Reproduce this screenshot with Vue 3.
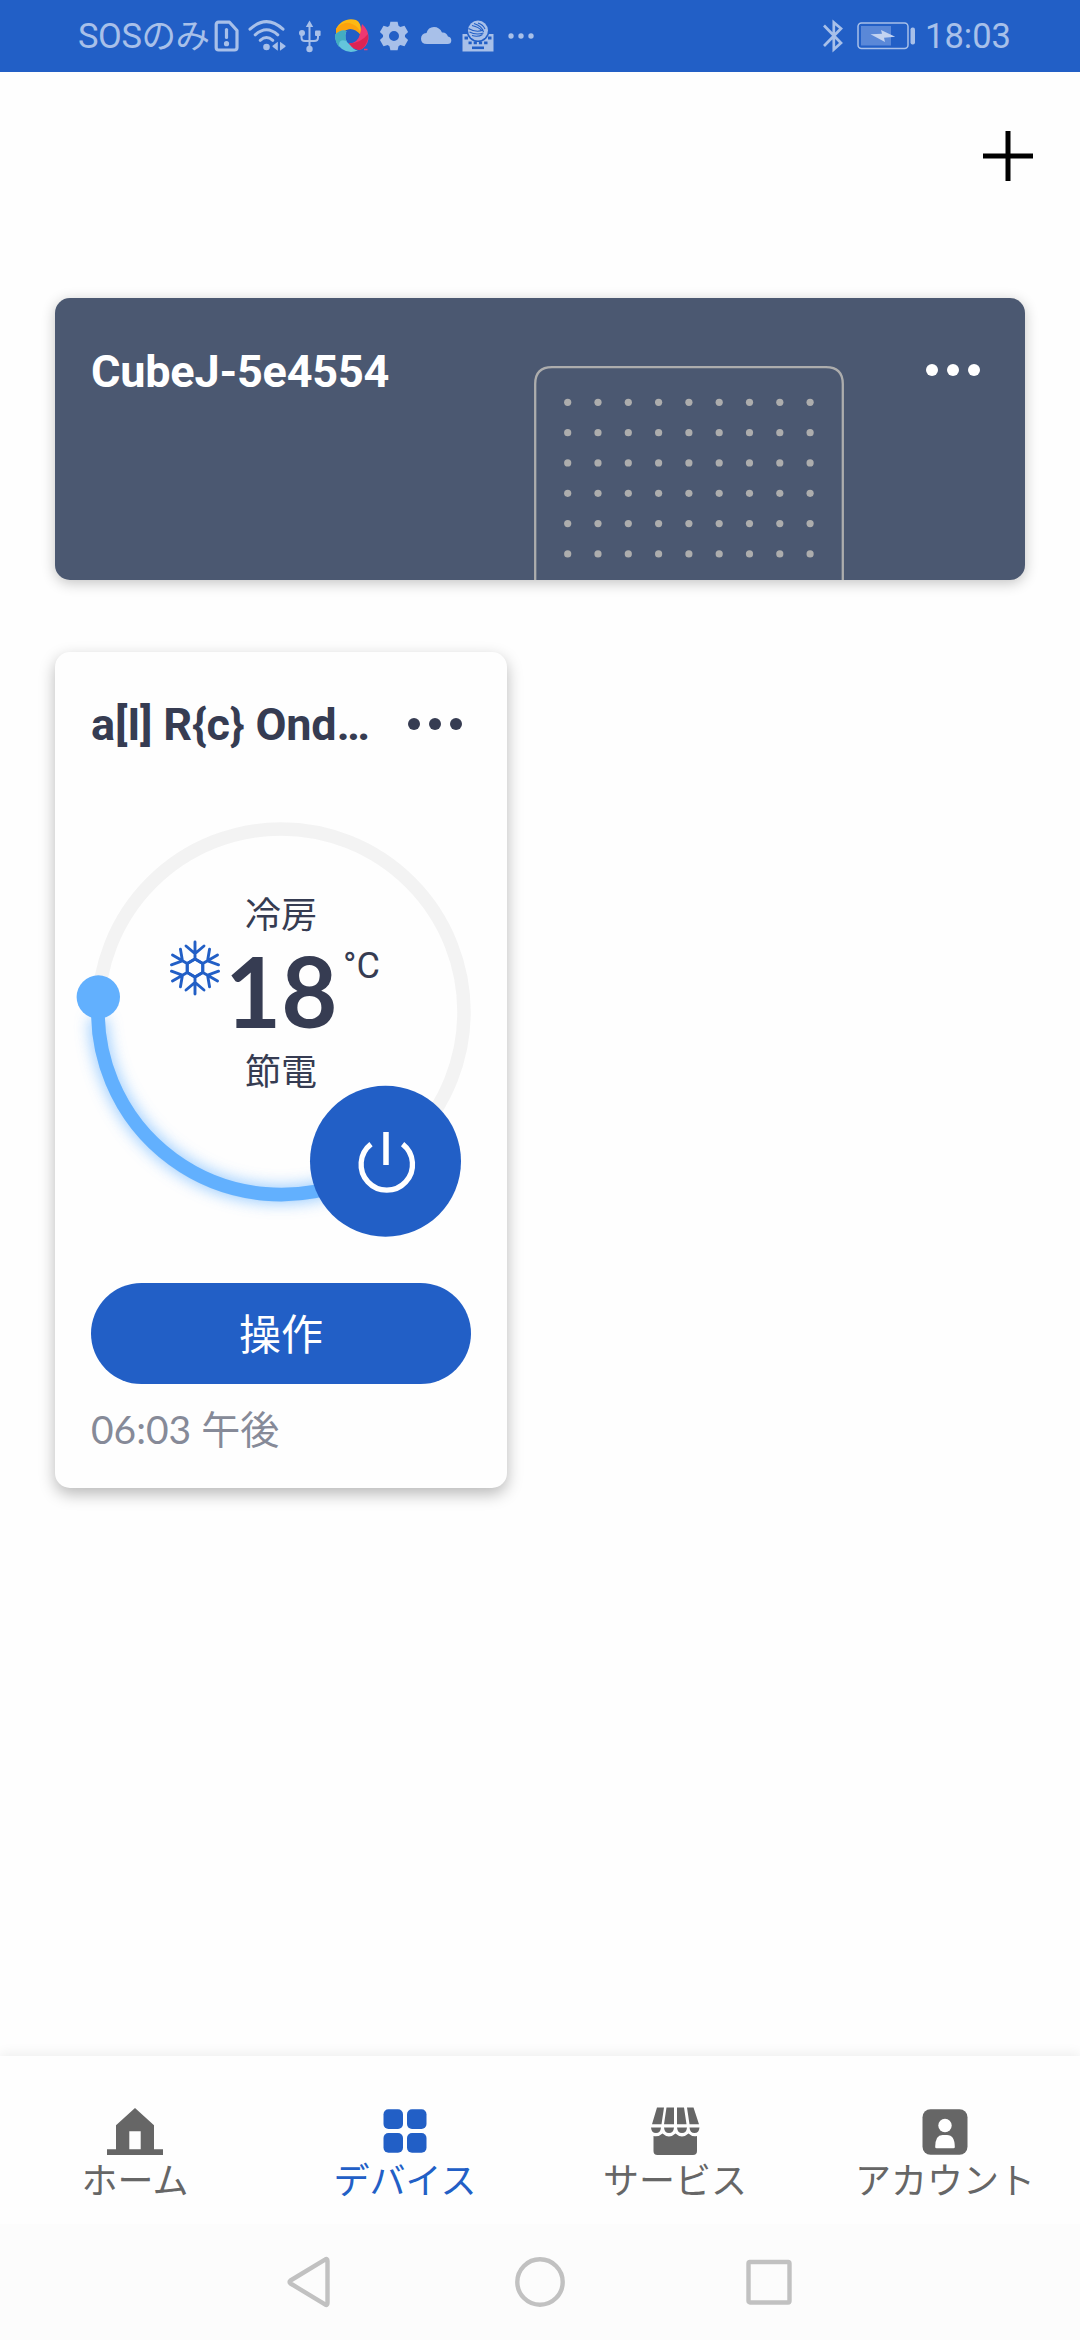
<script setup>
const dots = []
for (let row = 0; row < 6; row++) {
  for (let col = 0; col < 9; col++) {
    dots.push({ id: row * 9 + col, x: 33.7 + col * 30.3, y: 36.3 + row * 30.33 })
  }
}
const flakeArms = [0, 60, 120, 180, 240, 300]
const gearTeeth = [0, 60, 120, 180, 240, 300]
</script>

<template>
  <div class="screen">
    <header class="status">
      <span class="carrier">SOSのみ</span>
      <svg class="sim" width="26" height="34" viewBox="0 0 26 34">
        <path d="M4.5 3.2H15.5L23 11.5V28.5Q23 31 20.5 31H4.5Q2.2 31 2.2 28.5V5.5Q2.2 3.2 4.5 3.2Z" fill="none" stroke="currentColor" stroke-width="3.2" stroke-linejoin="round" />
        <path d="M12.5 10.5V18.5" stroke="currentColor" stroke-width="3.2" stroke-linecap="round" />
        <circle cx="12.5" cy="24.7" r="2.6" fill="currentColor" />
      </svg>
      <svg class="wifi" width="40" height="34" viewBox="0 0 40 34">
        <g fill="none" stroke="currentColor" stroke-width="3" stroke-linecap="round">
          <path d="M3 10.2Q19.5 -5 36 10.2" />
          <path d="M8.2 15.8Q19.5 5.6 30.8 15.8" />
          <path d="M13.2 21.3Q19.5 15.8 25.8 21.3" />
        </g>
        <circle cx="19.5" cy="28" r="3.3" fill="currentColor" />
        <path d="M30.8 22.8V31.8L25.5 27.8V26.8ZM33 22.8V31.8L38.5 27.8V26.8Z" fill="currentColor" />
      </svg>
      <svg class="usb" width="24" height="34" viewBox="0 0 24 34">
        <g fill="none" stroke="currentColor" stroke-width="2">
          <path d="M11.5 6V30M3.5 14V18.5Q3.5 22 7 22H16Q20 22 20 18.5V14" />
        </g>
        <path d="M11.5 1.5L15.2 8H7.8Z" fill="currentColor" />
        <circle cx="4" cy="14" r="3" fill="currentColor" />
        <rect x="17" y="11.5" width="5.6" height="5.6" rx="1" fill="currentColor" />
        <circle cx="11.5" cy="30" r="3.2" fill="currentColor" />
      </svg>
      <svg class="swirl" width="36" height="36" viewBox="0 0 36 36">
        <path d="M2 11C6 3 14-.5 22 2Q28 4.500 27 17Q20 7 11 12.500Q6 12 2 16Z" fill="#fdb913" />
        <path d="M2 11Q10 2 18 6Q26 9 27 17Q19 8 11 12.500Q6 12 2 16Z" fill="#fca30d" />
        <path d="M28 6Q35 12 34.500 21Q33 30 25 32Q16 30 15 25.500Q24 25 26 16Z" fill="#ee3872" />
        <path d="M34 21Q31 31 25 32Q16 30 15 25.500Q27 25 34 16Z" fill="#dc2454" />
        <path d="M1 17Q6 11 12.500 13Q9 22 16 27Q20 32 24 32.500Q15 36 8 31Q1 26 1 17Z" fill="#64c5dc" />
        <path d="M1 17Q6 11 12.500 13Q10 18 12.500 23Q4 20 5 29Q1 24 1 17Z" fill="#43adc2" />
        <path d="M30 31.500H33.500" stroke="#ee3872" stroke-width="1.500" />
      </svg>
      <svg class="gear" width="30" height="30" viewBox="-15 -15 30 30">
        <circle r="8" fill="none" stroke="currentColor" stroke-width="6" />
        <path v-for="a in gearTeeth" :key="a" d="M-4.800 -9L-3.600 -14.200H3.600L4.800 -9Z" :transform="`rotate(${a})`" fill="currentColor" />
      </svg>
      <svg class="cloud" width="32" height="20" viewBox="0 0 32 20">
        <path d="M7 18Q1 18 1 12.700Q1 7.500 6.500 7Q8 1 14 1Q19.500 1 22 6.500Q26 5.800 28 10.500Q31.300 11 31.300 14.500Q31.300 18 27.500 18Z" fill="currentColor" />
      </svg>
      <svg class="keyboard" width="32" height="34" viewBox="0 0 32 34">
        <path d="M.5 15H31.500V32.500H.5Z" fill="currentColor" />
        <circle cx="16" cy="11.500" r="11.500" fill="#225fc6" />
        <circle cx="16" cy="11.500" r="10" fill="currentColor" />
        <g fill="none" stroke="#225fc6" stroke-width="1.100">
          <path d="M12 4.500Q20 7 21.500 13M16 4Q21 5.500 23 10M6.500 9.500Q14 14 21.500 11M7.500 13Q14 16.500 21.500 14M10 16.500Q16 18.500 20.500 15.500M10 6.500Q17 8 20 12" />
        </g>
        <path d="M2.500 19H6M26 19H29.500M6.500 23.800H9.700M11.700 23.800H14.900M16.900 23.800H20.100M22.100 23.800H25.500" stroke="#225fc6" stroke-width="2.800" />
        <path d="M10 28.800H22" stroke="#225fc6" stroke-width="2.600" />
      </svg>
      <svg class="more" width="28" height="8" viewBox="0 0 28 8">
        <circle cx="4" cy="4" r="2.700" fill="currentColor" />
        <circle cx="14" cy="4" r="2.700" fill="currentColor" />
        <circle cx="24" cy="4" r="2.700" fill="currentColor" />
      </svg>
      <svg class="bluetooth" width="22" height="34" viewBox="0 0 22 34">
        <path d="M2 6.500L19 24L11.800 30.500V3.500L19 9.500L2 27" fill="none" stroke="currentColor" stroke-width="2.700" />
      </svg>
      <svg class="battery" width="60" height="30" viewBox="0 0 60 30">
        <rect x="1" y="2" width="50" height="25.500" rx="3.500" fill="none" stroke="currentColor" stroke-width="1.500" />
        <rect x="4" y="5" width="30" height="19.500" fill="#5a88d8" />
        <rect x="53.500" y="6.500" width="4.500" height="17" rx="2" fill="currentColor" />
        <path d="M13.500 13.300L25 12.800L24 9L38.200 15.800L27 16.800L28 21Z" fill="#c3d3f1" />
      </svg>
      <span class="clock">18:03</span>
    </header>

    <main class="content">
      <div class="toolbar">
        <svg width="50" height="50" viewBox="0 0 50 50">
          <path d="M25 0V50M0 25H50" stroke="#000" stroke-width="5" />
        </svg>
      </div>

      <section class="hub">
        <h2 class="hub-name">CubeJ-5e4554</h2>
        <svg class="cube" width="310" height="214" viewBox="0 0 310 214">
          <path d="M1.200 214V18Q1.200 1.200 18 1.200H292Q308.800 1.200 308.800 18V214" fill="none" stroke="#adadad" stroke-width="2.300" />
          <circle v-for="d in dots" :key="d.id" :cx="d.x" :cy="d.y" r="3.600" fill="#adadad" />
        </svg>
        <div class="menu hub-menu"><i></i><i></i><i></i></div>
      </section>

      <section class="device">
        <div class="device-head">
          <h2 class="device-name">a[I] R{c} Ond…</h2>
          <div class="menu"><i></i><i></i><i></i></div>
        </div>
        <div class="dial">
          <svg width="452" height="440" viewBox="55 812 452 440">
            <defs>
              <filter id="glow" x="-20%" y="-20%" width="140%" height="140%">
                <feGaussianBlur stdDeviation="8" />
              </filter>
            </defs>
            <circle cx="281" cy="1012" r="183" fill="none" stroke="#f3f3f3" stroke-width="13.500" />
            <path d="M98 1018A183 183 0 0 0 350 1181" fill="none" stroke="#62b0fe" stroke-width="16" opacity=".7" filter="url(#glow)" />
            <path d="M98.500 997A183 183 0 0 0 350 1181" fill="none" stroke="#62b0fe" stroke-width="13.700" />
            <circle cx="98.300" cy="997" r="21.700" fill="#62b0fe" />
            <circle cx="385.500" cy="1161.300" r="75.500" fill="#225fc6" />
            <path d="M371 1144.200A25.700 25.700 0 1 0 402.600 1144.200" fill="none" stroke="#fff" stroke-width="5.300" />
            <path d="M386 1132V1165" stroke="#fff" stroke-width="5.500" />
          </svg>
          <div class="readout">
            <span class="mode">冷房</span>
            <div class="temp">
              <svg class="flake" width="54" height="58" viewBox="-27 -29 54 58">
                <g v-for="a in flakeArms" :key="a" :transform="`rotate(${a})`" fill="none" stroke="#225fc6" stroke-width="2.900" stroke-linecap="round">
                  <path d="M-7.700 -4.500L0 -9L7.700 -4.500M0 -9V-26M-9 -22L0 -14.500L9 -22" />
                </g>
              </svg>
              <span class="value">18</span>
              <span class="unit">°C</span>
            </div>
            <span class="mode">節電</span>
          </div>
        </div>
        <button class="operate">操作</button>
        <p class="time">06:03 午後</p>
      </section>
    </main>

    <nav class="tabs">
      <div class="tab">
        <svg width="56" height="50" viewBox="0 0 56 50">
          <path d="M28 1L47 18.300V42.300H56V48H0V42.300H9V18.300ZM22.300 24.300V42.300H33.700V24.300Z" fill="currentColor" fill-rule="evenodd" />
        </svg>
        <span>ホーム</span>
      </div>
      <div class="tab active">
        <svg width="44" height="50" viewBox="0 0 44 50">
          <g fill="currentColor">
            <rect x=".5" y="2.300" width="19.500" height="19.700" rx="5" />
            <rect x="24" y="2.300" width="19.500" height="19.700" rx="5" />
            <rect x=".5" y="26" width="19.500" height="19.700" rx="5" />
            <rect x="24" y="26" width="19.500" height="19.700" rx="5" />
          </g>
        </svg>
        <span>デバイス</span>
      </div>
      <div class="tab">
        <svg width="50" height="50" viewBox="0 0 50 50">
          <g fill="currentColor">
            <path d="M7 .5H14L11.500 17.300H2ZM16.500 .5H24V17.300H14ZM27 .5H34L36.500 17.300H27ZM37 .5H43.500L49 17.300H39.500Z" />
            <path d="M1 20.500H11Q10.500 26 6 26Q1.500 26 1 20.500ZM14 20.500H24Q23.500 26 19 26Q14.500 26 14 20.500ZM27 20.500H37Q36.500 26 32 26Q27.500 26 27 20.500ZM39.500 20.500H49.500Q49 26 44.500 26Q40 26 39.500 20.500Z" />
            <path d="M3.500 29Q9 30 12.500 26.500Q19 32.500 25.500 26.500Q32 32.500 38.500 26.500Q42 30 47 29V44Q47 48 43 48H7.500Q3.500 48 3.500 44Z" />
          </g>
        </svg>
        <span>サービス</span>
      </div>
      <div class="tab">
        <svg width="46" height="50" viewBox="0 0 46 50">
          <rect x=".5" y="2.200" width="45" height="45.600" rx="8" fill="currentColor" />
          <circle cx="23" cy="18.500" r="6.700" fill="#fff" />
          <path d="M13.200 40Q13.200 28 20.500 28H25Q32.800 28 32.800 40Q32.800 41.300 31.500 41.300H14.500Q13.200 41.300 13.200 40Z" fill="#fff" />
        </svg>
        <span>アカウント</span>
      </div>
    </nav>

    <footer class="system">
      <svg width="46" height="54" viewBox="0 0 46 54">
        <path d="M41.500 6Q41.500 3 39 4.600L4.500 25.500Q2.600 27 4.500 28.500L39 49.400Q41.500 51 41.500 48Z" fill="none" stroke="#c1c1c1" stroke-width="4.400" stroke-linejoin="round" />
      </svg>
      <svg width="54" height="54" viewBox="0 0 54 54">
        <circle cx="27" cy="27" r="22.700" fill="none" stroke="#c1c1c1" stroke-width="4.400" />
      </svg>
      <svg width="46" height="54" viewBox="0 0 46 54">
        <rect x="2.500" y="7" width="41" height="40.500" rx="1.500" fill="none" stroke="#c1c1c1" stroke-width="4.400" />
      </svg>
    </footer>
  </div>
</template>

<style>
body {
  margin: 0;
  background: #fff;
}
</style>

<style scoped>
.screen {
  width: 1080px;
  height: 2340px;
  display: flex;
  flex-direction: column;
  overflow: hidden;
  background: #fefefe;
  font-family: Roboto, "Noto Sans CJK JP", sans-serif;
}
svg {
  display: block;
  flex: none;
}
h2,
p {
  margin: 0;
}
.status {
  height: 72px;
  flex: none;
  display: flex;
  align-items: center;
  box-sizing: border-box;
  padding: 0 70px 0 78px;
  background: #225fc6;
  color: #a8c0e9;
  font-size: 34.5px;
  line-height: 74px;
  white-space: nowrap;
}
.carrier {
  width: 136px;
  letter-spacing: -0.4px;
}
.wifi {
  margin-left: 7px;
}
.usb {
  margin-left: 11px;
}
.swirl {
  margin-left: 12px;
}
.gear {
  margin-left: 9px;
}
.cloud {
  margin-left: 11px;
}
.keyboard {
  margin-left: 10px;
}
.more {
  margin-left: 13px;
}
.bluetooth {
  margin-left: auto;
}
.battery {
  margin-left: 13px;
}
.clock {
  width: 85px;
  margin-left: 8px;
}
.content {
  flex: 1;
  display: flex;
  flex-direction: column;
  padding: 59px 55px 0;
}
.toolbar {
  display: flex;
  justify-content: flex-end;
  height: 167px;
  margin-right: -8px;
}
.hub {
  height: 282px;
  display: flex;
  align-items: flex-start;
  border-radius: 15px;
  background: #4b5871;
  color: #fff;
  box-shadow: 0 3px 14px rgba(0, 0, 0, 0.24);
}
.hub-name,
.device-name {
  font-size: 45px;
  line-height: 54px;
  font-weight: 700;
  letter-spacing: -0.2px;
  white-space: nowrap;
}
.hub-name {
  width: 443px;
  margin: 47px 0 0 36px;
}
.cube {
  margin-top: 68px;
}
.menu {
  display: flex;
  gap: 9px;
}
.menu i {
  width: 12px;
  height: 12px;
  border-radius: 50%;
  background: currentColor;
}
.hub-menu {
  margin: 66px 0 0 82px;
}
.device {
  width: 452px;
  height: 836px;
  margin-top: 72px;
  display: flex;
  flex-direction: column;
  border-radius: 15px;
  background: #fefefe;
  color: #363c52;
  box-shadow: 0 6px 16px rgba(0, 0, 0, 0.28);
}
.device-head {
  height: 160px;
  display: flex;
  align-items: flex-start;
  box-sizing: border-box;
  padding: 46px 45px 0 36px;
  justify-content: space-between;
}
.device-head .menu {
  margin-top: 20px;
}
.dial {
  position: relative;
  height: 440px;
}
.readout {
  position: absolute;
  top: 77px;
  left: 0;
  width: 452px;
  display: flex;
  flex-direction: column;
  align-items: center;
}
.mode {
  font-size: 36px;
  line-height: 54px;
}
.temp {
  width: 452px;
  height: 103px;
  display: flex;
  align-items: flex-start;
}
.flake {
  margin: -4px 0 0 113px;
}
.value {
  width: 120px;
  margin: -7px 0 0 3px;
  font-family: Lato, sans-serif;
  font-weight: 700;
  font-size: 97px;
  line-height: 110px;
}
.unit {
  margin: 1px 0 0 -2px;
  font-size: 36px;
  line-height: 44px;
}
.operate {
  height: 101px;
  margin: 31px 36px 0;
  padding: 0 0 3px;
  border: 0;
  border-radius: 51px;
  background: #225fc6;
  color: #fff;
  font: 42px/98px "Noto Sans CJK JP", sans-serif;
}
.time {
  margin: 15px 0 0 36px;
  color: #868a98;
  font: 39px/60px Lato, "Noto Sans CJK JP", sans-serif;
}
.tabs {
  height: 168px;
  flex: none;
  display: flex;
  box-sizing: border-box;
  background: #fefefe;
  color: #666;
  box-shadow: 0 -2px 12px rgba(0, 0, 0, 0.07);
}
.tab {
  flex: 1;
  display: flex;
  flex-direction: column;
  align-items: center;
  gap: 3px;
  padding-top: 51px;
  font-size: 36px;
  line-height: 44px;
  white-space: nowrap;
}
.active {
  color: #225fc6;
}
.system {
  height: 116px;
  flex: none;
  display: flex;
  align-items: center;
  justify-content: space-between;
  box-sizing: border-box;
  padding: 0 288px 0 286px;
  background: #fcfcfc;
  position: relative;
}
.system svg:nth-child(2) {
  margin: 0 -1px 0 1px;
}
</style>
